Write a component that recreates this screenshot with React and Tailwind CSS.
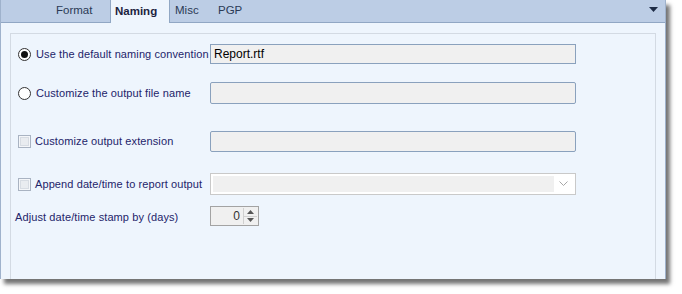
const Radio = ({ checked }) => (
  <span className="flex h-[13px] w-[13px] shrink-0 items-center justify-center rounded-full border border-[#333] bg-white">
    {checked && <span className="h-[7px] w-[7px] rounded-full bg-[#111]" />}
  </span>
);

const Checkbox = () => (
  <span className="flex h-[13px] w-[13px] shrink-0 items-center justify-center border border-[#a9b3c2] bg-[#f4f6f9]">
    <span className="h-[9px] w-[9px] border border-[#d7dce3] bg-[#e9ecf0]" />
  </span>
);

const TextBox = ({ value, rounded }) => (
  <div
    className={`flex h-[20px] w-[366px] items-center border border-[#8aa1bd] bg-[#f0f0f0] px-[3px] text-[12px] text-black ${rounded ? 'rounded-[2px]' : ''}`}
  >
    {value}
  </div>
);

export default function App() {
  const label = 'whitespace-nowrap text-[11px] tracking-[0.1px] text-[#23246a]';

  return (
    <div className="h-[294px] w-[682px] bg-white" style={{ fontFamily: '"Liberation Sans", Arial, sans-serif' }}>
      <div className="flex h-[279px] w-[666px] flex-col border-l border-r border-[#9fb2cc] shadow-[4px_5px_4px_rgba(0,0,0,0.55)]">
        {/* tab strip */}
        <div className="relative flex h-[23px] items-end border-b border-[#91a7c4] bg-[#bccde5] text-[11.5px] text-[#2b3a55]">
          <div className="ml-[55px] flex h-[22px] w-[54px] items-center">Format</div>
          <div className="-mb-[1px] flex h-[23px] w-[60px] items-center border-l border-r border-[#91a7c4] bg-[#eef5fd] pl-[4px] font-bold text-[#1c2340]">
            Naming
          </div>
          <div className="flex h-[22px] w-[48px] items-center pl-[5px]">Misc</div>
          <div className="flex h-[22px] items-center">PGP</div>
          <svg className="absolute right-[7px] top-[7px]" width="9" height="5" viewBox="0 0 9 5">
            <path d="M0 0H9L4.5 5Z" fill="#1d2b45" />
          </svg>
        </div>

        {/* body */}
        <div className="flex flex-1 bg-[#eef5fd] pl-[9px] pr-[9px] pt-[10px]">
          <div className="flex flex-1 flex-col border-l border-r border-t border-[#d3dae3]">
            <div className="mt-[10px] flex h-[20px] items-center">
              <div className="flex w-[199px] items-center pl-[7px]">
                <Radio checked />
                <span className={`ml-[5px] ${label}`}>Use the default naming convention</span>
              </div>
              <TextBox value="Report.rtf" />
            </div>

            <div className="mt-[18px] flex h-[22px] items-center">
              <div className="flex w-[199px] items-center pl-[7px]">
                <Radio />
                <span className={`ml-[5px] ${label}`}>Customize the output file name</span>
              </div>
              <div className="h-[22px] w-[366px] rounded-[2px] border border-[#8aa1bd] bg-[#f0f0f0]" />
            </div>

            <div className="mt-[27px] flex h-[21px] items-center">
              <div className="flex w-[199px] items-center pl-[7px]">
                <Checkbox />
                <span className={`ml-[4px] ${label}`}>Customize output extension</span>
              </div>
              <div className="h-[21px] w-[366px] rounded-[2px] border border-[#8aa1bd] bg-[#f0f0f0]" />
            </div>

            <div className="mt-[21px] flex h-[22px] items-center">
              <div className="flex w-[199px] items-center pl-[7px]">
                <Checkbox />
                <span className={`ml-[4px] ${label}`}>Append date/time to report output</span>
              </div>
              <div className="flex h-[22px] w-[366px] items-center border border-[#c9c9c9] bg-white p-[2px]">
                <div className="h-full flex-1 bg-[#f0f0f0]" />
                <svg className="mx-[5px]" width="9" height="6" viewBox="0 0 9 6">
                  <path d="M0.5 0.5L4.5 4.5L8.5 0.5" fill="none" stroke="#a6a6a6" strokeWidth="1" />
                </svg>
              </div>
            </div>

            <div className="mt-[11px] flex h-[20px] items-center">
              <div className="w-[199px] pl-[4px]">
                <span className={label}>Adjust date/time stamp by (days)</span>
              </div>
              <div className="flex h-[20px] w-[49px] items-center border border-[#a3a3a3] bg-[#f0f0f0]">
                <span className="flex-1 pr-[3px] text-right text-[12px] text-[#333]">0</span>
                <div className="mr-[1px] flex h-[16px] w-[14px] flex-col border-l border-[#d0d0d0]">
                  <div className="flex flex-1 items-center justify-center border-b border-[#d0d0d0]">
                    <svg width="7" height="4" viewBox="0 0 7 4">
                      <path d="M0 4H7L3.5 0Z" fill="#555" />
                    </svg>
                  </div>
                  <div className="flex flex-1 items-center justify-center">
                    <svg width="7" height="4" viewBox="0 0 7 4">
                      <path d="M0 0H7L3.5 4Z" fill="#555" />
                    </svg>
                  </div>
                </div>
              </div>
            </div>
          </div>
        </div>
      </div>
    </div>
  );
}
